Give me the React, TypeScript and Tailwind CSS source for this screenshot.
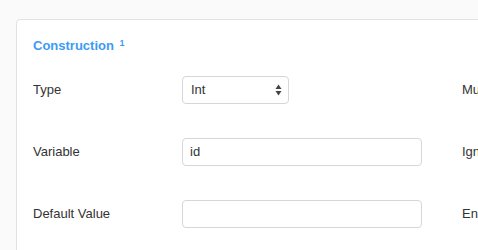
function SelectArrows() {
  return (
    <svg width="7" height="12" viewBox="0 0 7 12" className="text-[#444]">
      <path d="M3.5 0.5 L6.5 5 L0.5 5 Z" fill="currentColor" />
      <path d="M3.5 11.5 L6.5 7 L0.5 7 Z" fill="currentColor" />
    </svg>
  )
}

function Row({ label, side, children }: { label: string; side: string; children: React.ReactNode }) {
  return (
    <div className="flex items-center h-[28px]">
      <span className="w-[149px] shrink-0">{label}</span>
      <div className="w-[280px] shrink-0">{children}</div>
      <span className="whitespace-nowrap">{side}</span>
    </div>
  )
}

export default function App() {
  return (
    <div
      className="w-[478px] h-[250px] overflow-hidden bg-[#fafafa] pt-[19px] pl-4 text-[13px] text-[#333]"
      style={{ fontFamily: '"Liberation Sans", Arial, sans-serif' }}
    >
      <div className="w-[600px] h-[260px] bg-white border border-[#e2e2e2] rounded-[4px] pt-[17px] pl-4">
        <h3 className="text-[#3d9bf5] font-bold text-[13px] leading-[18px]">
          Construction <sup className="text-[9px] ml-[2px]">1</sup>
        </h3>
        <div className="mt-[21px] flex flex-col gap-[34px]">
          <Row label="Type" side="Multiple">
            <div className="w-[107px] h-[28px] border border-[#d6d6d6] rounded-[4px] flex items-center justify-between pl-[8px] pr-[6px]">
              <span>Int</span>
              <SelectArrows />
            </div>
          </Row>
          <Row label="Variable" side="Ignore">
            <div className="w-[240px] h-[28px] border border-[#d6d6d6] rounded-[4px] flex items-center pl-[7px]">
              id
            </div>
          </Row>
          <Row label="Default Value" side="Encoding">
            <div className="w-[240px] h-[28px] border border-[#d6d6d6] rounded-[4px]" />
          </Row>
        </div>
      </div>
    </div>
  )
}
